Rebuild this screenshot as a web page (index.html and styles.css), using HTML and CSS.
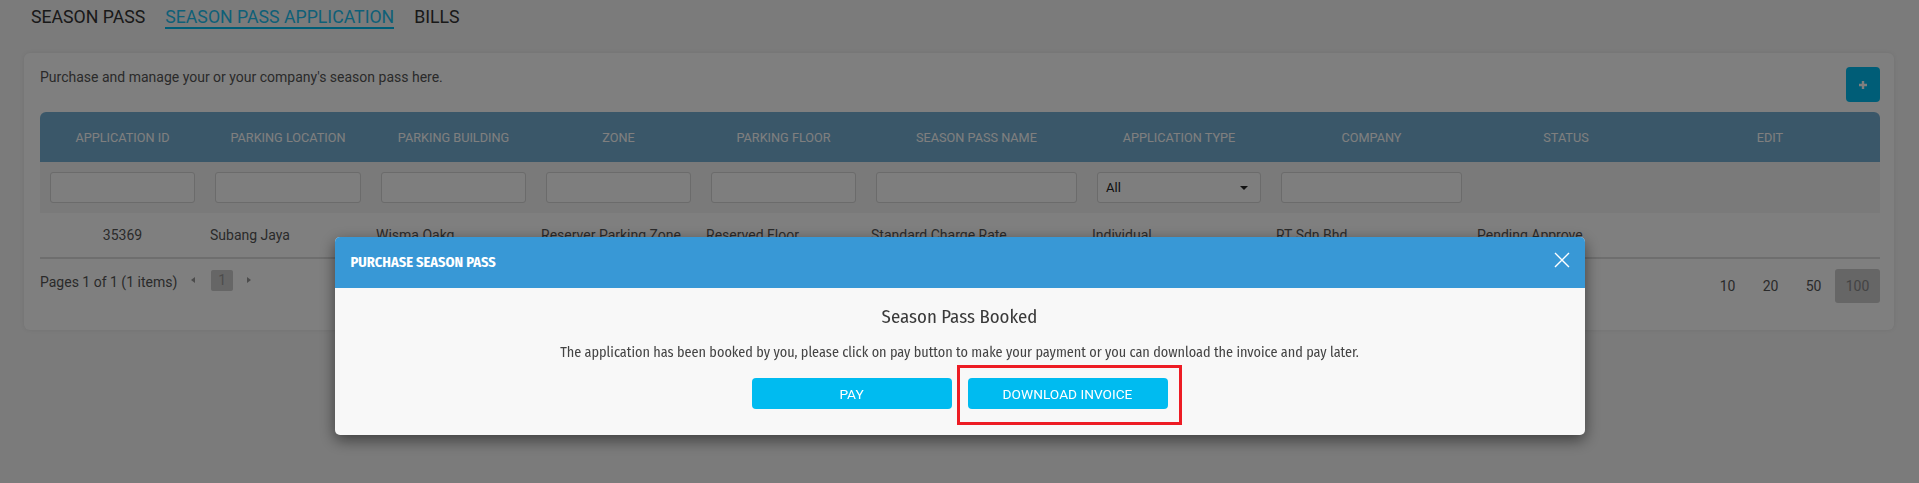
FILE: index.html
```html
<!DOCTYPE html>
<html lang="en">
<head>
    <meta charset="UTF-8">
    <meta name="viewport" content="width=device-width, initial-scale=1.0">
    <title>Season Pass Application</title>
    <link rel="stylesheet" href="styles.css">
</head>
<body>
    <nav class="tabs">
        <a class="tab">SEASON PASS</a>
        <a class="tab active">SEASON PASS APPLICATION</a>
        <a class="tab">BILLS</a>
    </nav>

    <section class="card">
        <div class="card-top">
            <p class="intro">Purchase and manage your or your company's season pass here.</p>
            <button class="add-btn" title="Add">
                <svg width="10" height="10" viewBox="0 0 10 10"><path d="M5 1v8M1 5h8" stroke="#fff" stroke-width="2.4" fill="none"/></svg>
            </button>
        </div>

        <div class="grid">
            <div class="row head">
                <div>APPLICATION ID</div>
                <div>PARKING LOCATION</div>
                <div>PARKING BUILDING</div>
                <div>ZONE</div>
                <div>PARKING FLOOR</div>
                <div>SEASON PASS NAME</div>
                <div>APPLICATION TYPE</div>
                <div>COMPANY</div>
                <div>STATUS</div>
                <div>EDIT</div>
            </div>
            <div class="row filters">
                <div><input type="text"></div>
                <div><input type="text"></div>
                <div><input type="text"></div>
                <div><input type="text"></div>
                <div><input type="text"></div>
                <div><input type="text"></div>
                <div><div class="dropdown">All</div></div>
                <div><input type="text"></div>
                <div></div>
                <div></div>
            </div>
            <div class="row data">
                <div class="center">35369</div>
                <div>Subang Jaya</div>
                <div>Wisma Oakg</div>
                <div>Reserver Parking Zone</div>
                <div>Reserved Floor</div>
                <div>Standard Charge Rate</div>
                <div>Individual</div>
                <div>RT Sdn Bhd</div>
                <div>Pending Approve</div>
                <div></div>
            </div>
        </div>

        <div class="pager">
            <div class="pager-left">
                <span class="pager-info">Pages 1 of 1 (1 items)</span>
                <span class="arrow prev"></span>
                <span class="page-num">1</span>
                <span class="arrow next"></span>
            </div>
            <div class="page-sizes">
                <span class="size">10</span>
                <span class="size">20</span>
                <span class="size">50</span>
                <span class="size current">100</span>
            </div>
        </div>
    </section>

    <div class="backdrop">
        <div class="modal">
            <div class="modal-header">
                <h2>PURCHASE SEASON PASS</h2>
                <button class="close-btn" title="Close">
                    <svg width="16" height="16" viewBox="0 0 16 16"><path d="M1 1l14 14M15 1L1 15" stroke="#fff" stroke-width="1.4" fill="none"/></svg>
                </button>
            </div>
            <div class="modal-body">
                <h3>Season Pass Booked</h3>
                <p>The application has been booked by you, please click on pay button to make your payment or you can download the invoice and pay later.</p>
                <div class="actions">
                    <button class="btn">PAY</button>
                    <div class="marked">
                        <button class="btn">DOWNLOAD INVOICE</button>
                        <span class="highlight"></span>
                    </div>
                </div>
            </div>
        </div>
    </div>
</body>
</html>
```
FILE: styles.css
```css
body {
    margin: 0;
    font-family: Roboto, Arial, sans-serif;
    background: #f6f6f6;
    color: #555;
    height: 483px;
    overflow: hidden;
}

/* tabs */
.tabs {
    display: flex;
    gap: 20px;
    padding: 7px 0 0 31px;
}
.tab {
    font-size: 17.7px;
    line-height: 20px;
    color: #333;
    border-bottom: 2px solid transparent;
}
.tab.active {
    color: #1cc0f0;
    border-bottom-color: #00bbee;
}

/* card */
.card {
    margin: 24px 25px 0 24px;
    padding: 14px 14px 27px 16px;
    background: #fff;
    border-radius: 6px;
    box-shadow: 0 0 4px rgba(0, 0, 0, 0.08);
}
.card-top {
    display: flex;
    justify-content: space-between;
    align-items: flex-start;
    margin-bottom: 10px;
}
.intro {
    margin: 0;
    font-size: 14px;
    line-height: 20px;
    color: #555;
}
.add-btn {
    width: 34px;
    height: 35px;
    border: 0;
    border-radius: 4px;
    background: #00bbee;
    display: flex;
    align-items: center;
    justify-content: center;
    padding: 0;
}

/* grid */
.row {
    display: grid;
    grid-template-columns: 165px 166px 165px 165px 165px 221px 184px 201px 188px 1fr;
}
.head {
    height: 50px;
    align-items: center;
    background: #74aed2;
    border-radius: 6px 6px 0 0;
    color: #fff;
    font-size: 12.7px;
    text-align: center;
}
.filters {
    background: #f4f4f4;
    padding: 10px 0;
}
.filters > div {
    padding: 0 10px;
}
.filters input,
.dropdown {
    box-sizing: border-box;
    width: 100%;
    height: 31px;
    border: 1px solid #d6d6d6;
    border-radius: 3px;
    background: #fcfcfc;
    font-family: inherit;
    display: block;
}
.dropdown {
    position: relative;
    padding-left: 8px;
    font-size: 13px;
    line-height: 29px;
    color: #222;
}
.dropdown::after {
    content: "";
    position: absolute;
    right: 12px;
    top: 13px;
    border: 4px solid transparent;
    border-top: 4px solid #222;
    border-bottom: 0;
}
.data {
    height: 44px;
    align-items: center;
    font-size: 14px;
    color: #555;
    border-bottom: 2px solid #dcdcdc;
}
.data > div {
    padding-left: 5px;
    white-space: nowrap;
}
.data .center {
    text-align: center;
    padding-left: 0;
}

/* pager */
.pager {
    display: flex;
    justify-content: space-between;
    align-items: flex-start;
    margin-top: 10px;
    font-size: 14px;
}
.pager-left {
    display: flex;
    align-items: center;
    height: 22px;
}
.pager-info {
    color: #555;
    margin-right: 14px;
    padding-top: 3px;
}
.arrow {
    width: 0;
    height: 0;
    border-top: 3.5px solid transparent;
    border-bottom: 3.5px solid transparent;
}
.arrow.prev {
    border-right: 4px solid #999;
}
.arrow.next {
    border-left: 4px solid #999;
}
.page-num {
    width: 22px;
    height: 21px;
    margin: 0 14px 0 16px;
    background: #cccccc;
    border-radius: 2px;
    color: #999;
    text-align: center;
    line-height: 21px;
}
.page-sizes {
    display: flex;
}
.size {
    width: 43px;
    height: 34px;
    line-height: 34px;
    text-align: center;
    color: #555;
    border-radius: 3px;
}
.size.current {
    width: 45px;
    background: #cccccc;
    color: #888;
}

/* modal */
.backdrop {
    position: fixed;
    inset: 0;
    background: rgba(0, 0, 0, 0.5);
    display: flex;
    justify-content: center;
    align-items: flex-start;
    padding-top: 237px;
}
.modal {
    width: 1250px;
    background: #f8f8f8;
    border-radius: 5px;
    overflow: hidden;
    box-shadow: 0 5px 15px rgba(0, 0, 0, 0.5);
    font-family: "Fira Sans Condensed", "Roboto Condensed", sans-serif;
}
.modal-header {
    height: 51px;
    background: #3898d6;
    display: flex;
    align-items: center;
    justify-content: space-between;
    padding: 0 15px 0 16px;
}
.modal-header h2 {
    margin: 0;
    font-size: 14.4px;
    font-weight: 700;
    color: #fff;
}
.close-btn {
    border: 0;
    background: none;
    padding: 0;
    width: 16px;
    height: 16px;
    margin-top: -6px;
}
.modal-body {
    padding: 17px 0 26px;
    text-align: center;
}
.modal-body h3 {
    margin: 0;
    font-size: 18.8px;
    font-weight: 400;
    line-height: 24px;
    color: #3a3a3a;
}
.modal-body p {
    margin: 14px 0 15px;
    font-size: 14.2px;
    line-height: 20px;
    color: #444;
}
.actions {
    display: flex;
    justify-content: center;
    gap: 16px;
}
.btn {
    width: 200px;
    height: 31px;
    border: 0;
    border-radius: 4px;
    background: #00bbf0;
    color: #fff;
    font-family: Roboto, Arial, sans-serif;
    font-size: 13.7px;
    padding: 0;
}
.marked {
    position: relative;
}
.highlight {
    position: absolute;
    top: -13px;
    right: -14px;
    bottom: -16px;
    left: -11px;
    border: 3px solid #ed1c24;
}
```
